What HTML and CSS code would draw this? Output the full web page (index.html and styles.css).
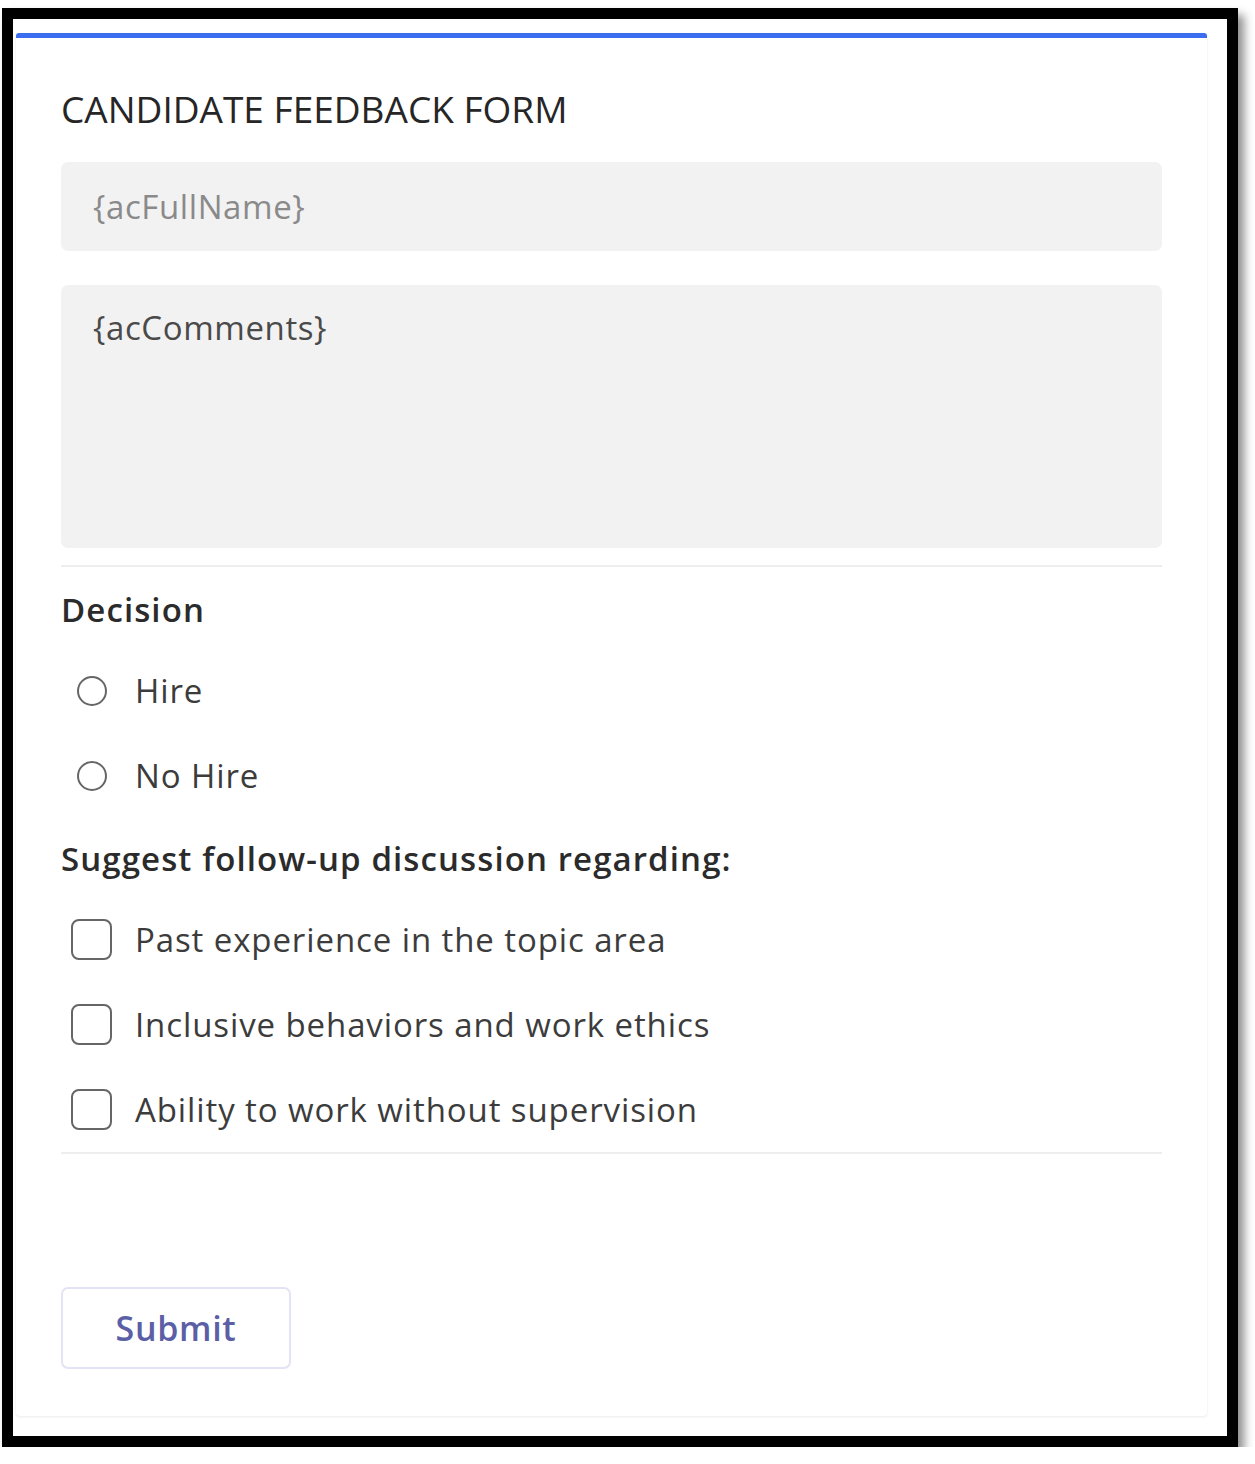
FILE: index.html
```html
<!DOCTYPE html>
<html lang="en">
<head>
<meta charset="utf-8">
<title>Candidate Feedback Form</title>
<link rel="stylesheet" href="styles.css">
</head>
<body>
<div class="frame">
  <div class="card">
    <h1 class="title">CANDIDATE FEEDBACK FORM</h1>
    <div class="input input-name">{acFullName}</div>
    <div class="input input-comments">{acComments}</div>
    <div class="sep"></div>
    <div class="label">Decision</div>
    <div class="choices">
      <div class="row"><span class="radio"></span><span class="text">Hire</span></div>
      <div class="row"><span class="radio"></span><span class="text">No Hire</span></div>
    </div>
    <div class="label label-suggest">Suggest follow-up discussion regarding:</div>
    <div class="choices">
      <div class="row"><span class="check"></span><span class="text">Past experience in the topic area</span></div>
      <div class="row"><span class="check"></span><span class="text">Inclusive behaviors and work ethics</span></div>
      <div class="row"><span class="check"></span><span class="text">Ability to work without supervision</span></div>
    </div>
    <div class="sep sep-bottom"></div>
    <button class="submit" type="button">Submit</button>
  </div>
</div>
</body>
</html>
```
FILE: styles.css
```css
html, body {
  margin: 0;
  padding: 0;
  background: #ffffff;
}
body {
  font-family: "Open Sans", "Noto Sans", sans-serif;
  color: #333333;
}
.frame {
  margin: 8px 0 0 2px;
  border: 11px solid #000000;
  background: #ffffff;
  box-shadow: 6px 7px 9px rgba(0, 0, 0, 0.45);
  padding: 14px 20px 0 3px;
  box-sizing: content-box;
  width: 1191px;
  height: 1403px;
}
.card {
  width: 1191px;
  box-sizing: border-box;
  height: 1383px;
  border-top: 5px solid #3a6df0;
  border-radius: 3px 3px 4px 4px;
  box-shadow: 0 1px 3px rgba(0, 0, 0, 0.08), 0 0 1px rgba(0, 0, 0, 0.06);
  padding: 46px 45px 0 45px;
  display: flex;
  flex-direction: column;
  align-items: flex-start;
}
.title {
  margin: 0;
  font-size: 37px;
  font-weight: 400;
  line-height: 50px;
  color: #262626;
}
.input {
  align-self: stretch;
  background: #f2f2f2;
  border-radius: 7px;
  font-size: 33px;
  letter-spacing: 0.6px;
  padding: 0 32px;
}
.input-name {
  margin-top: 28px;
  height: 89px;
  line-height: 89px;
  color: #8a8a8a;
}
.input-comments {
  margin-top: 34px;
  height: 263px;
  line-height: 44px;
  padding-top: 21px;
  box-sizing: border-box;
  color: #4a4a4a;
}
.sep {
  align-self: stretch;
  height: 2px;
  background: #eeeeee;
  margin-top: 17px;
}
.sep-bottom {
  margin-top: 0;
}
.label {
  margin-top: 18px;
  font-size: 33px;
  font-weight: 600;
  letter-spacing: 1.1px;
  line-height: 50px;
  color: #2b2b2b;
}
.label-suggest {
  margin-top: 16px;
}
.choices {
  margin-top: 13px;
  display: flex;
  flex-direction: column;
}
.row {
  height: 85px;
  display: flex;
  align-items: center;
  font-size: 33px;
  letter-spacing: 0.9px;
  color: #3c3c3c;
}
.radio {
  width: 26px;
  height: 26px;
  border: 2.5px solid #666666;
  border-radius: 50%;
  margin-left: 16px;
  margin-right: 28px;
}
.check {
  width: 37px;
  height: 37px;
  border: 2.5px solid #666666;
  border-radius: 8px;
  margin-left: 10px;
  margin-right: 23px;
}
.submit {
  margin-top: 133px;
  width: 230px;
  height: 82px;
  background: #ffffff;
  border: 2px solid #e3e3f7;
  border-radius: 7px;
  font-family: "Open Sans", "Noto Sans", sans-serif;
  font-size: 34px;
  font-weight: 600;
  letter-spacing: 0.7px;
  color: #5b5fa6;
  padding: 0;
}
```
